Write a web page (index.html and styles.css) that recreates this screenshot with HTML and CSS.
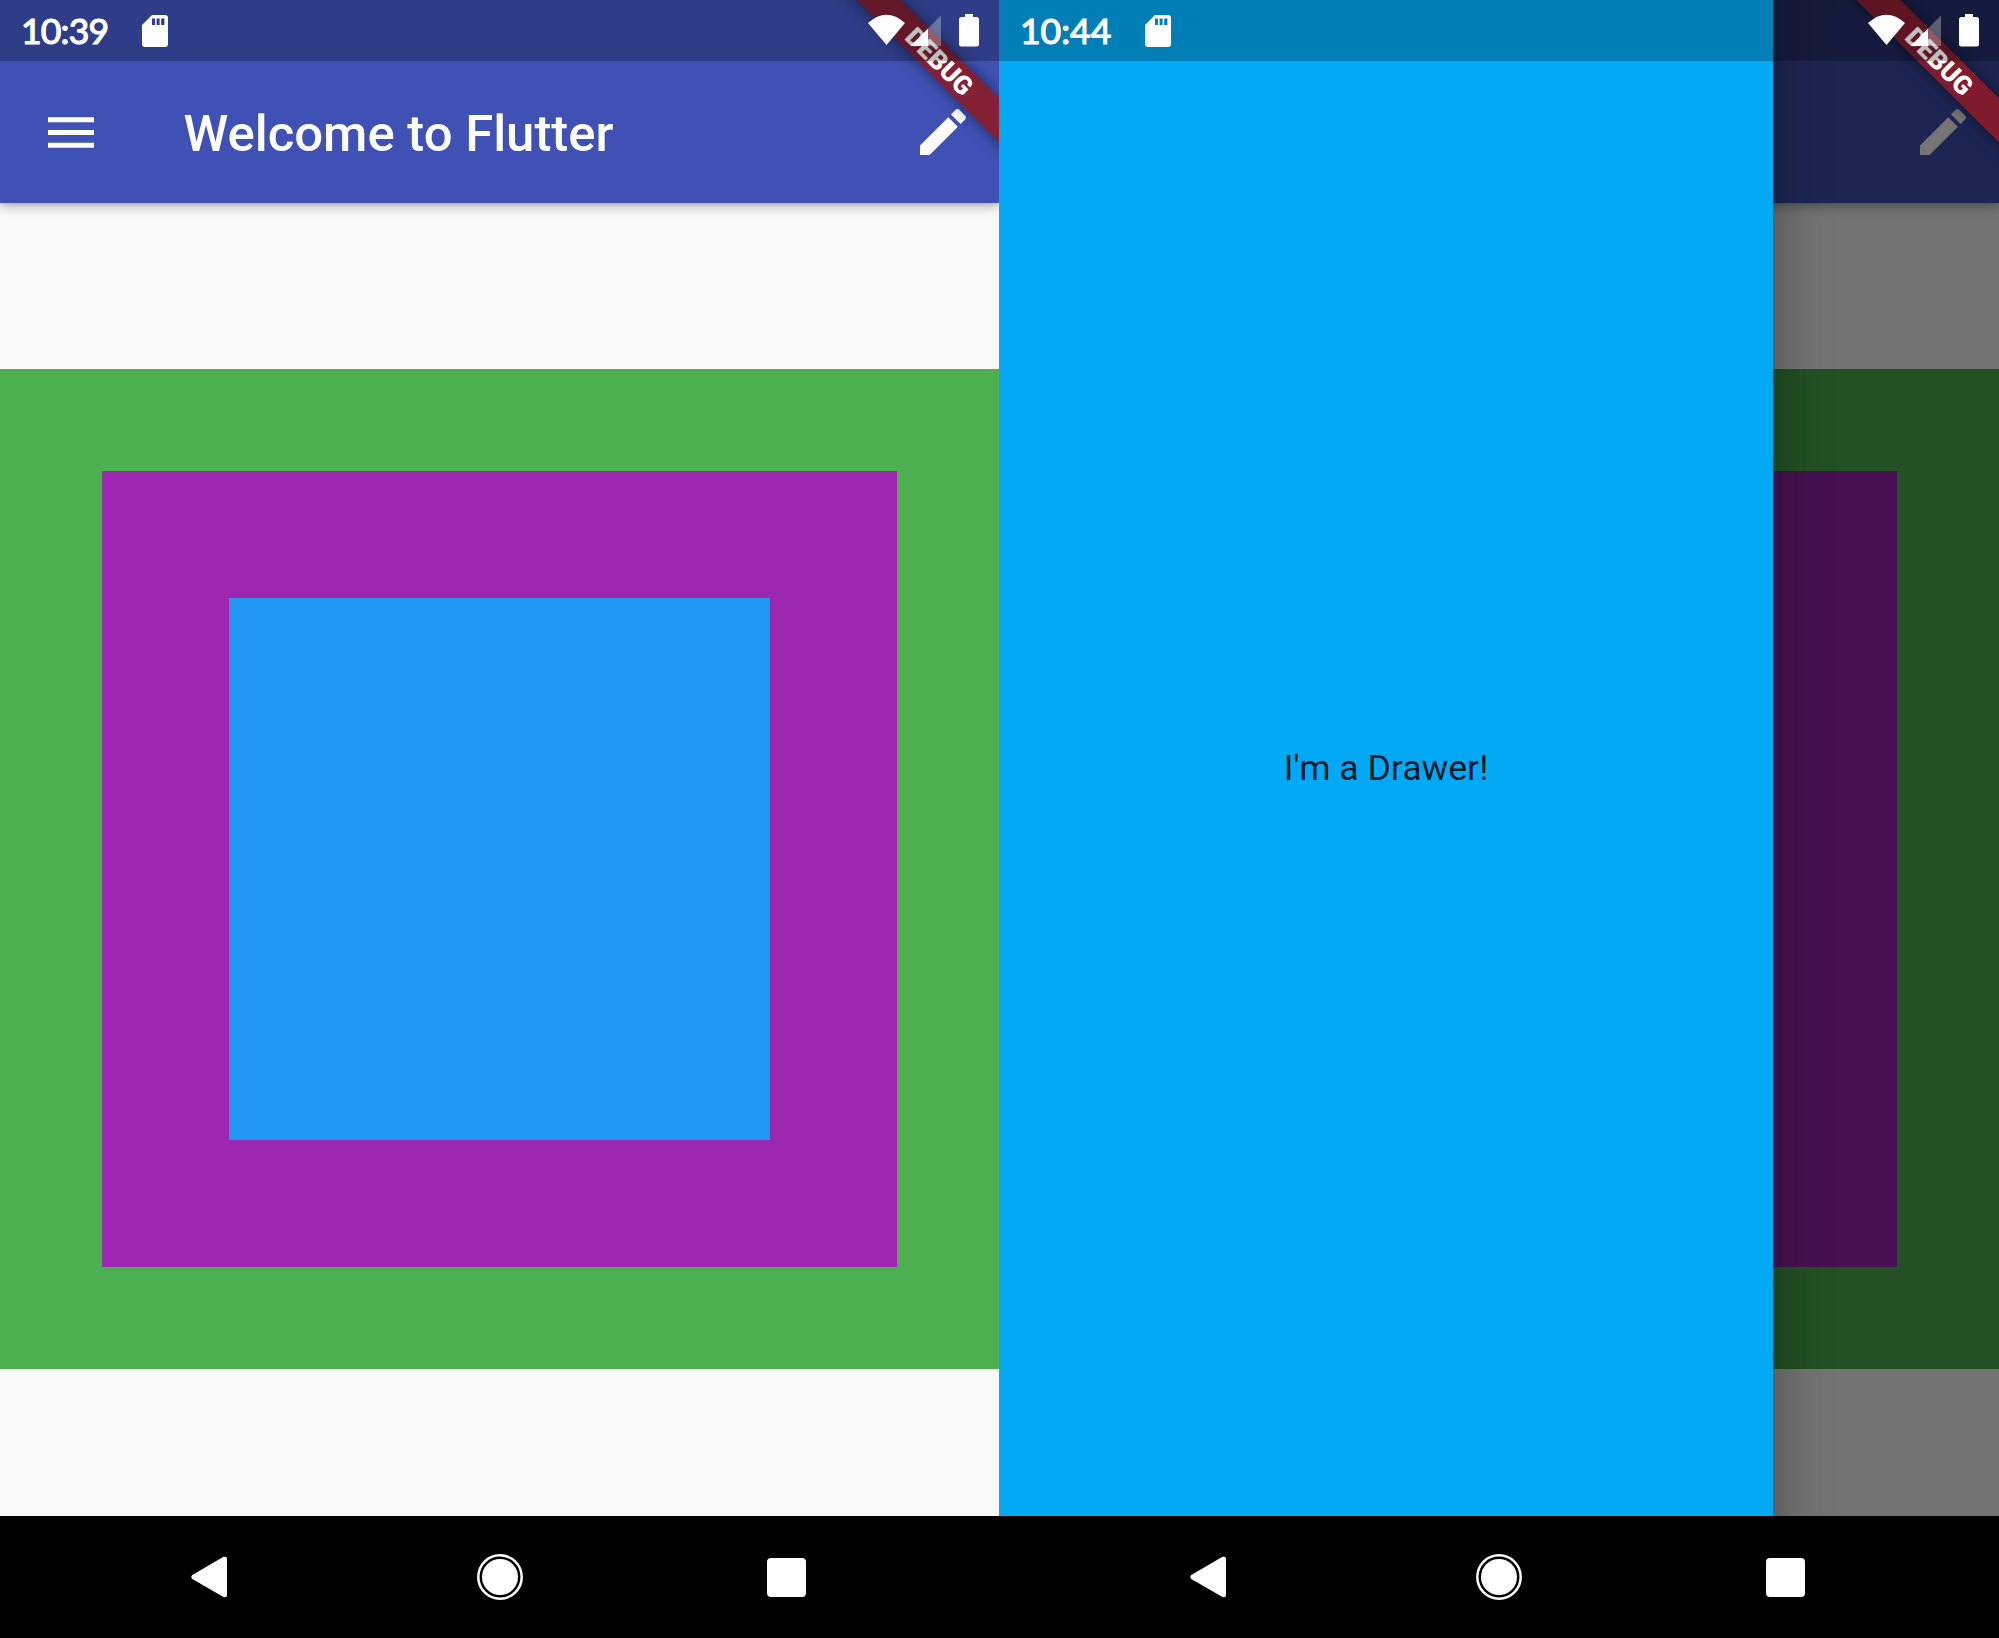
FILE: index.html
```html
<!DOCTYPE html>
<html lang="en">
<head>
<meta charset="utf-8">
<title>Welcome to Flutter</title>
<link rel="stylesheet" href="styles.css">
</head>
<body>
<svg class="defs" width="0" height="0" aria-hidden="true">
  <symbol id="sd" viewBox="0 0 26 32"><path fill-rule="evenodd" d="M10 0H23Q26 0 26 3V29Q26 32 23 32H3Q0 32 0 29V10ZM10 3.500V10H13V3.500ZM14.600 3.500V10H17.600V3.500ZM19.200 3.500V10H22.400V3.500Z"/></symbol>
  <symbol id="status" viewBox="0 0 112 34"><path d="M0 9Q18.500-7.500 37 9L18.500 31Z"/><path d="M42.500 32L60 14.500V32Z"/><path opacity=".3" d="M60 14.500L73 1.500V32H60Z"/><path d="M97 0H105V3H108.500Q111 3 111 5.500V30Q111 32.500 108.500 32.500H93.500Q91 32.500 91 30V5.500Q91 3 93.500 3H97Z"/></symbol>
  <symbol id="menu" viewBox="3 6 18 12"><path d="M3 18h18v-2H3v2zm0-5h18v-2H3v2zm0-7v2h18V6H3z"/></symbol>
  <symbol id="edit" viewBox="3 3 18 18"><path d="M3 17.250V21h3.750L17.810 9.940l-3.750-3.750L3 17.250zM20.710 7.040c.39-.39.39-1.020 0-1.410l-2.340-2.340c-.39-.39-1.020-.39-1.410 0l-1.830 1.830 3.750 3.750 1.830-1.830z"/></symbol>
  <symbol id="back" viewBox="0 0 36 42"><path d="M1.300 19L32.500.8Q36 0 36 3V39Q36 42 32.500 41L1.300 23Q-.6 21 1.300 19Z"/></symbol>
  <symbol id="home" viewBox="0 0 46 46"><circle cx="23" cy="23" r="18"/><circle cx="23" cy="23" r="21.700" fill="none" stroke="#fff" stroke-width="2.500"/></symbol>
  <symbol id="recent" viewBox="0 0 39 39"><rect width="39" height="39" rx="4"/></symbol>
</svg>
<main class="screens">
  <section class="phone">
    <div class="app">
      <header class="appbar">
        <svg class="menu"><use href="#menu"/></svg>
        <h1>Welcome to Flutter</h1>
        <svg class="edit"><use href="#edit"/></svg>
      </header>
      <div class="body"><div class="green"><div class="purple"><div class="blue"></div></div></div></div>
      <div class="banner"><span>DEBUG</span></div>
      <div class="statusbar"><span class="clock">10:39</span><svg class="sd"><use href="#sd"/></svg><svg class="status"><use href="#status"/></svg></div>
    </div>
    <nav><svg class="back"><use href="#back"/></svg><svg class="home"><use href="#home"/></svg><svg class="recent"><use href="#recent"/></svg></nav>
  </section>
  <section class="phone">
    <div class="app">
      <header class="appbar">
        <svg class="menu"><use href="#menu"/></svg>
        <span class="grow"></span>
        <svg class="edit"><use href="#edit"/></svg>
      </header>
      <div class="body"><div class="green"><div class="purple"><div class="blue"></div></div></div></div>
      <div class="scrim"></div>
      <aside class="drawer">I'm a Drawer!</aside>
      <div class="banner"><span>DEBUG</span></div>
      <div class="statusbar"><span class="clock late">10:44</span><svg class="sd"><use href="#sd"/></svg><svg class="status"><use href="#status"/></svg></div>
    </div>
    <nav><svg class="back"><use href="#back"/></svg><svg class="home"><use href="#home"/></svg><svg class="recent"><use href="#recent"/></svg></nav>
  </section>
</main>
</body>
</html>
```
FILE: styles.css
```css
* { box-sizing: border-box; }
body { margin: 0; background: #000; font-family: Roboto, sans-serif; overflow: hidden; }
svg { fill: #fff; flex: none; display: block; }
.defs { position: absolute; }
.screens { display: grid; grid-template-columns: 999px 1000px; height: 1638px; }
.phone { display: flex; flex-direction: column; overflow: hidden; }
.app { position: relative; height: 1516px; overflow: hidden; background: #fafafa; display: flex; flex-direction: column; }
.appbar { position: relative; z-index: 1; height: 203px; flex: none; padding: 61px 33px 0 48px; background: #3f51b5; display: flex; align-items: center; box-shadow: 0 5px 10px rgba(0,0,0,.22), 0 1px 4px rgba(0,0,0,.16); }
.menu { width: 46px; height: 31px; }
h1 { margin: 3px 0 0 89.500px; flex: 1; color: #fff; font-size: 50.860px; font-weight: 500; line-height: 60px; white-space: nowrap; }
.grow { flex: 1; }
.edit { width: 46px; height: 46px; }
.body { padding-top: 166px; }
.green { height: 1000px; padding: 102px; background: #4caf50; }
.purple { height: 796px; padding: 127px; background: #9c27b0; }
.blue { height: 542px; background: #2196f3; }
.scrim { position: absolute; inset: 0; z-index: 2; background: rgba(0,0,0,.54); }
.drawer { position: absolute; z-index: 3; top: -60px; left: 0; width: 774px; height: 1636px; padding-top: 19px; background: #03a9f4; display: flex; align-items: center; justify-content: center; color: rgba(0,0,0,.87); font-size: 35.600px; box-shadow: 0 0 52px rgba(0,0,0,.34); }
.banner { position: absolute; z-index: 4; width: 300px; height: 31px; right: -89.500px; top: 45px; transform: rotate(45deg); background: rgba(139,27,40,.9); box-shadow: 0 0 15px rgba(0,0,0,.5); display: flex; align-items: center; justify-content: center; color: #fff; font-size: 26px; font-weight: 900; }
.banner span { margin-left: 2px; }
.statusbar { position: absolute; z-index: 5; inset: 0 0 auto; height: 61px; background: rgba(0,0,0,.25); display: flex; align-items: center; padding: 0 19px 0 21px; }
.clock { width: 121px; color: #fff; font-family: Lato, sans-serif; font-size: 35.500px; font-weight: 400; letter-spacing: -.8px; -webkit-text-stroke: 1.200px #fff; }
.late { width: 125px; letter-spacing: 0; }
.sd { width: 26px; height: 32px; }
.status { width: 112px; height: 34px; margin-left: auto; }
nav { height: 122px; background: #000; display: flex; align-items: center; padding-left: 190.500px; }
.back { width: 36px; height: 42px; }
.home { width: 46px; height: 46px; margin-left: 250px; }
.recent { width: 39px; height: 39px; margin-left: 244.500px; }
```
